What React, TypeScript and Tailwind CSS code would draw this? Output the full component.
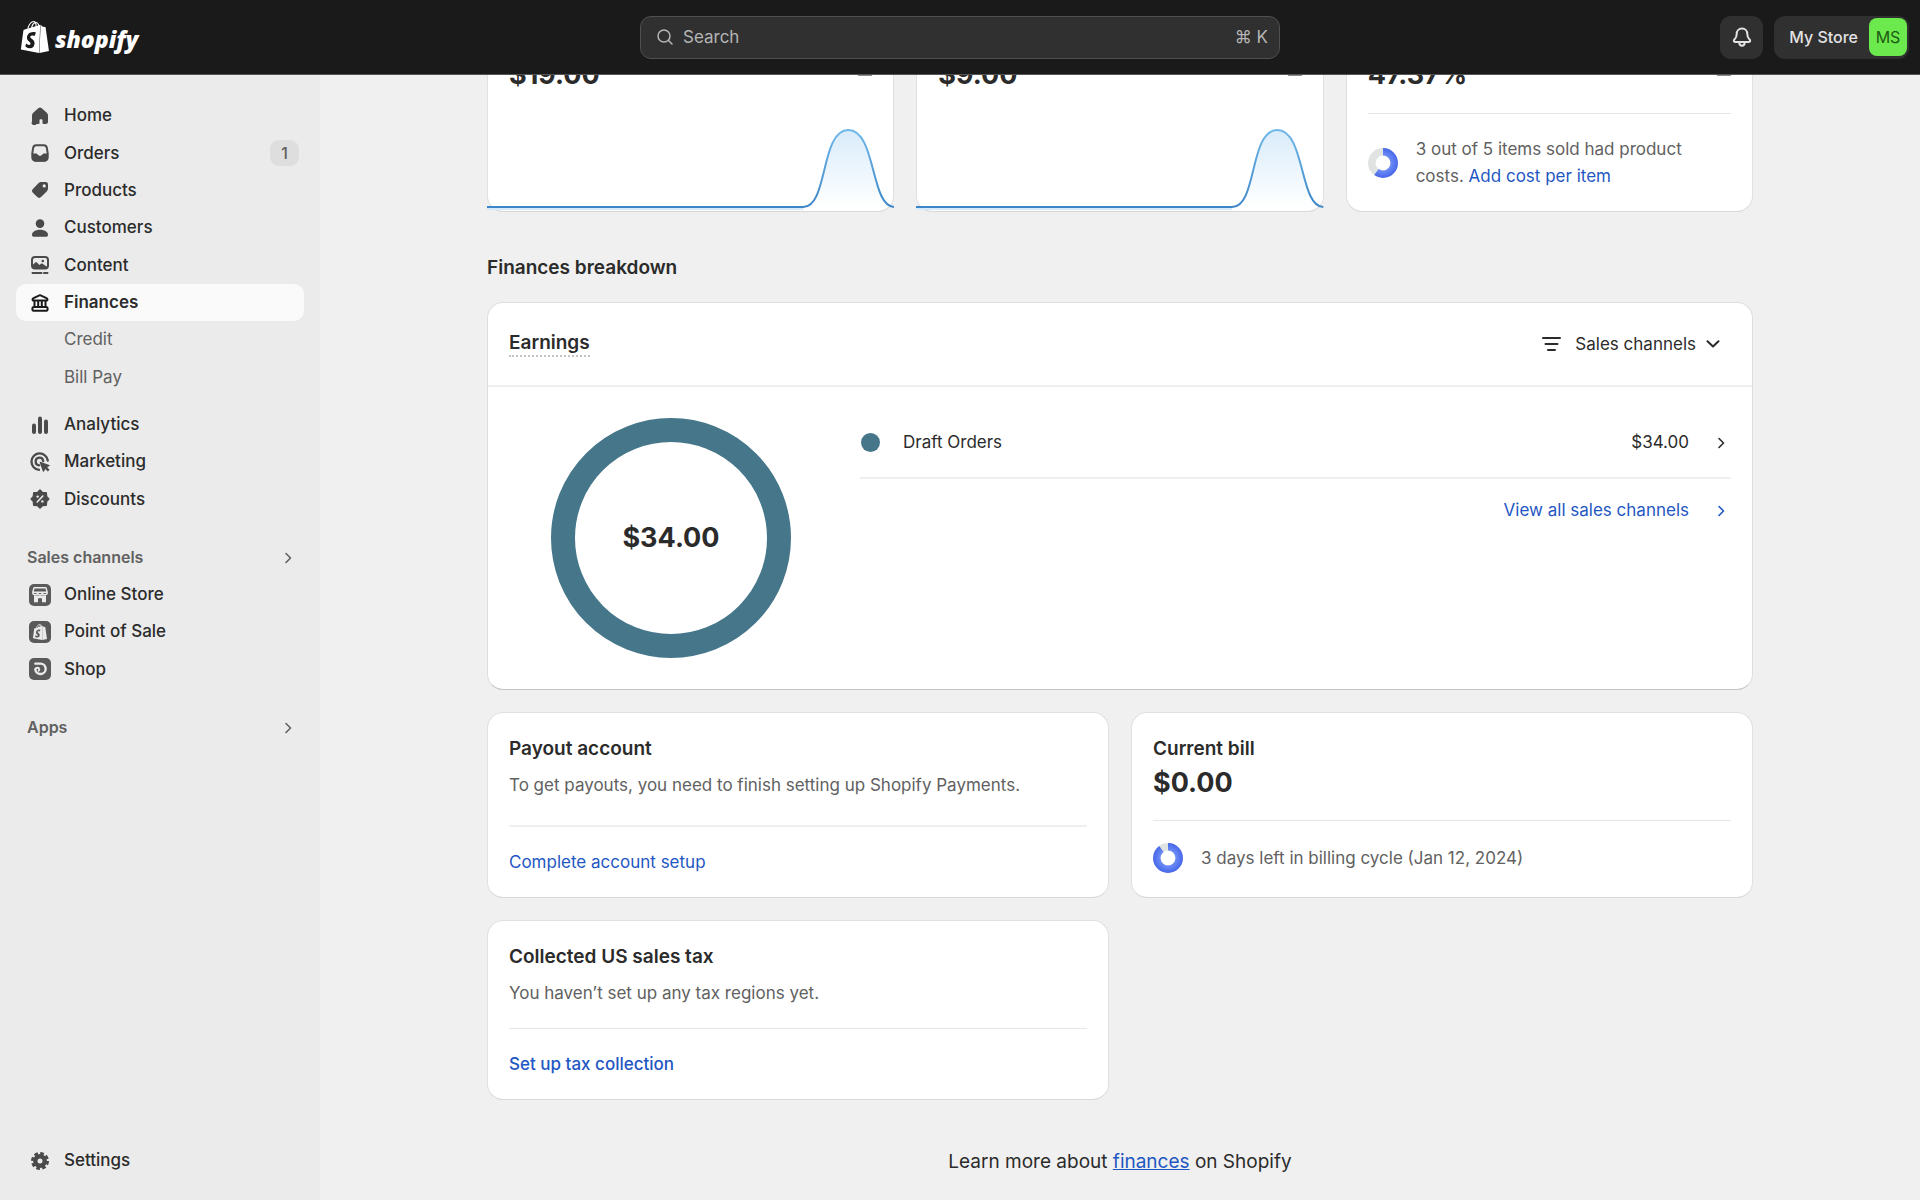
import React from 'react';
import { SiShopify } from 'react-icons/si';

interface IconProps {
  className?: string;
}

interface NavItem {
  label: string;
  icon?: React.ReactNode;
  badge?: string;
  active?: boolean;
  sub?: boolean;
}

const HomeIcon = () => (
  <svg className="size-[18px]" viewBox="0 0 18 18" fill="currentColor" aria-hidden="true">
    <path d="M7.5 1.1a2.3 2.3 0 0 1 3 0l5.3 4.6c.8.7 1.2 1.6 1.2 2.6v6.200a2.500 2.500 0 0 1-2.500 2.500h-2a1 1 0 0 1-1-1v-2.800a1 1 0 0 0-1-1h-1a1 1 0 0 0-1 1V16a1 1 0 0 1-1 1h-2A2.500 2.500 0 0 1 1 14.500V8.300c0-1 .4-1.900 1.200-2.600z" />
  </svg>
);

const OrdersIcon = () => (
  <svg className="size-[18px]" viewBox="0 0 18 18" aria-hidden="true">
    <path
      d="M5.2 1.2h7.6c1.5 0 2.7 1 3 2.5l.9 5.3v4.5a3.3 3.3 0 0 1-3.3 3.3H4.6a3.3 3.3 0 0 1-3.3-3.3V9l.9-5.3c.3-1.5 1.5-2.5 3-2.5z"
      fill="none"
      stroke="currentColor"
      strokeWidth="2"
    />
    <path d="M1 9.500h4.300c.5 0 .8.300 1.100.7.500.9 1.400 1.500 2.600 1.500s2.100-.6 2.600-1.500c.3-.4.6-.7 1.100-.7H17v4c0 2.500-1.500 4-4 4H5c-2.500 0-4-1.500-4-4z" fill="currentColor" />
  </svg>
);

const ProductsIcon = () => (
  <svg className="size-[18px]" viewBox="0 0 18 18" fill="currentColor" aria-hidden="true">
    <path
      fillRule="evenodd"
      d="M10.5 1h4.200A2.300 2.300 0 0 1 17 3.300v4c0 1.200-.5 2.300-1.300 3.100l-5.400 5.400a3 3 0 0 1-4.300 0l-3.900-3.700a3 3 0 0 1 0-4.300l5.300-5.500C8.200 1.400 9.300 1 10.500 1zm2.700 5.500a1.600 1.600 0 1 0 0-3.200 1.600 1.600 0 0 0 0 3.200z"
    />
  </svg>
);

const CustomersIcon = () => (
  <svg className="size-[18px]" viewBox="0 0 18 18" fill="currentColor" aria-hidden="true">
    <circle cx="9" cy="4.6" r="4.3" />
    <path d="M1 16c0-3 3.300-5.200 8-5.200s8 2.200 8 5.200c0 1-.7 1.700-1.700 1.700H2.700C1.700 17.700 1 17 1 16z" />
  </svg>
);

const ContentIcon = () => (
  <svg className="size-[18px]" viewBox="0 0 18 18" fill="none" aria-hidden="true">
    <rect x="1" y="1" width="16" height="11.5" rx="3" stroke="currentColor" strokeWidth="2" />
    <path d="M1 9.500l3-2.700c.7-.6 1.500-.6 2.100 0L8.500 9l1.200-1c.7-.6 1.500-.6 2.200 0L17 11.500l-2 1.500H3l-2-1.500z" fill="currentColor" />
    <circle cx="11.8" cy="5" r="1.3" fill="currentColor" />
    <path d="M1.500 17h9M13 17h3.500" stroke="currentColor" strokeWidth="2" strokeLinecap="round" />
  </svg>
);

const FinancesIcon = () => (
  <svg className="size-[18px] text-[#1a1a1a]" viewBox="0 0 18 18" fill="none" stroke="currentColor" strokeWidth="2" strokeLinejoin="round" aria-hidden="true">
    <path d="M9 1.200l6.500 2.900c.8.400 1 .8 1 1.300 0 .7-.5 1.200-1.200 1.200H2.700c-.7 0-1.200-.5-1.200-1.200 0-.5.2-.9 1-1.300z" />
    <path d="M3.500 7v6M7.200 7v6M10.800 7v6M14.500 7v6" />
    <path d="M2.900 13h12.200c.8 0 1.500.7 1.500 1.500v1c0 .7-.5 1.200-1.200 1.200H2.600c-.7 0-1.200-.5-1.200-1.200v-1c0-.8.700-1.500 1.500-1.500z" />
  </svg>
);

const AnalyticsIcon = () => (
  <svg className="size-[18px]" viewBox="0 0 18 18" fill="currentColor" aria-hidden="true">
    <rect x="1" y="7.5" width="4" height="10.5" rx="2" />
    <rect x="7" y="0.5" width="4" height="17.5" rx="2" />
    <rect x="13" y="3.5" width="4" height="14.5" rx="2" />
  </svg>
);

const MarketingIcon = () => (
  <svg className="size-5" viewBox="0 0 20 20" fill="none" aria-hidden="true">
    <path d="M17.800 8.500A8.200 8.200 0 1 0 9 17.800" stroke="currentColor" strokeWidth="2.3" strokeLinecap="round" />
    <path d="M13.200 9A3.800 3.800 0 1 0 9.200 13.300" stroke="currentColor" strokeWidth="2.3" strokeLinecap="round" />
    <path d="M10.300 9.700l9 3.200c.6.200.6.900.1 1.200l-2.200 1.200 2.300 2.500-1.700 1.700-2.500-2.400-1.300 2.300c-.3.500-1 .5-1.200-.1l-3.100-8.900c-.2-.5.200-.9.600-.7z" fill="currentColor" />
  </svg>
);

const DiscountsIcon = () => (
  <svg className="size-5" viewBox="0 0 20 20" fill="none" aria-hidden="true">
    <path
      d="M10 1.200l2.500 2.300 3.700.3.300 3.700L18.800 10l-2.300 2.500-.3 3.700-3.700.3L10 18.800l-2.500-2.300-3.700-.3-.3-3.700L1.200 10l2.300-2.500.3-3.700 3.700-.3z"
      fill="currentColor"
      stroke="currentColor"
      strokeWidth="1.6"
      strokeLinejoin="round"
    />
    <path d="M7.200 13l5.600-6" stroke="#ebebeb" strokeWidth="1.6" strokeLinecap="round" />
    <circle cx="7.6" cy="7.6" r="1.2" fill="#ebebeb" />
    <circle cx="12.4" cy="12.4" r="1.2" fill="#ebebeb" />
  </svg>
);

const OnlineStoreIcon = () => (
  <svg className="size-[22px]" viewBox="0 0 22 22" aria-hidden="true">
    <rect width="22" height="22" rx="5" fill="#5a5a5a" />
    <path d="M5.200 3.700h11.600M3.800 8l1.200-4M18.200 8L17 4M3.800 8.200h14.400" stroke="#ebebeb" strokeWidth="1.4" strokeLinecap="round" />
    <path d="M3.800 8.500c0 3 4.800 3 4.800 0 0 3 4.800 3 4.800 0 0 3 4.800 3 4.800 0" fill="none" stroke="#ebebeb" strokeWidth="1.5" />
    <path d="M5 11.500h12v6.800h-4v-4.100H9v4.100H5z" fill="#ebebeb" />
  </svg>
);

const PosIcon = () => (
  <span className="flex size-[22px] items-center justify-center rounded-[5px] bg-[#5a5a5a] text-[#ebebeb]">
    <SiShopify className="size-4" aria-hidden="true" />
  </span>
);

const ShopIcon = () => (
  <svg className="size-[22px]" viewBox="0 0 22 22" fill="none" stroke="#ebebeb" strokeLinecap="round" strokeLinejoin="round" aria-hidden="true">
    <rect width="22" height="22" rx="5" fill="#5a5a5a" stroke="none" />
    <path d="M6.300 5.600h5.200a5.200 5.200 0 1 1-5.200 5.800" strokeWidth="2.4" />
    <path d="M6.300 11.200c.6-1.800 3.600-2 4-.2.200.8-.1 1.500-.7 1.800" strokeWidth="1.8" />
  </svg>
);

const SettingsIcon = () => (
  <svg className="size-5" viewBox="0 0 20 20" fill="none" stroke="currentColor" aria-hidden="true">
    <circle cx="10" cy="10" r="7.5" strokeWidth="3" strokeDasharray="3.6 2.29" />
    <circle cx="10" cy="10" r="4.7" strokeWidth="4.4" />
  </svg>
);

const ChevronRight = ({ className }: IconProps) => (
  <svg className={className} viewBox="0 0 12 12" fill="none" stroke="currentColor" strokeWidth="1.6" strokeLinecap="round" strokeLinejoin="round" aria-hidden="true">
    <path d="M4 1.500L8.500 6 4 10.500" />
  </svg>
);

const mainNav: NavItem[] = [
  { label: 'Home', icon: <HomeIcon /> },
  { label: 'Orders', icon: <OrdersIcon />, badge: '1' },
  { label: 'Products', icon: <ProductsIcon /> },
  { label: 'Customers', icon: <CustomersIcon /> },
  { label: 'Content', icon: <ContentIcon /> },
  { label: 'Finances', icon: <FinancesIcon />, active: true },
  { label: 'Credit', sub: true },
  { label: 'Bill Pay', sub: true },
];

const insightNav: NavItem[] = [
  { label: 'Analytics', icon: <AnalyticsIcon /> },
  { label: 'Marketing', icon: <MarketingIcon /> },
  { label: 'Discounts', icon: <DiscountsIcon /> },
];

const channelNav: NavItem[] = [
  { label: 'Online Store', icon: <OnlineStoreIcon /> },
  { label: 'Point of Sale', icon: <PosIcon /> },
  { label: 'Shop', icon: <ShopIcon /> },
];

const NavLink = ({ item }: { item: NavItem }) => (
  <li className="flex">
    <a
      href="#"
      className={`flex flex-1 items-center rounded-[10px] pr-[5px] pl-3 ${
        item.active ? 'bg-[#fafafa] font-semibold' : item.sub ? 'text-[#616161]' : 'font-medium'
      }`}
    >
      <span className="mr-3 flex w-6 justify-center text-[#4a4a4a]">{item.icon}</span>
      <span className="flex-1">{item.label}</span>
      {item.badge && (
        <span className="flex h-[26px] w-[29px] items-center justify-center rounded-[9px] bg-[#dedede] text-[16px] text-[#616161]">
          {item.badge}
        </span>
      )}
    </a>
  </li>
);

const NavHeading = ({ label }: { label: string }) => (
  <button type="button" className="flex h-[37px] w-full items-center justify-between pr-[10px] pl-[11px] text-[16px] font-semibold text-[#616161]">
    {label}
    <ChevronRight className="size-3" />
  </button>
);

const Sidebar = () => (
  <nav className="flex w-80 shrink-0 flex-col bg-[#ebebeb] px-4 pt-[22px] pb-[21px]">
    <ul className="grid h-[299px] auto-rows-fr">
      {mainNav.map((item) => (
        <NavLink key={item.label} item={item} />
      ))}
    </ul>
    <ul className="mt-[10px] grid h-28 auto-rows-fr">
      {insightNav.map((item) => (
        <NavLink key={item.label} item={item} />
      ))}
    </ul>
    <div className="mt-[21px]">
      <NavHeading label="Sales channels" />
      <ul className="grid h-28 auto-rows-fr">
        {channelNav.map((item) => (
          <NavLink key={item.label} item={item} />
        ))}
      </ul>
    </div>
    <div className="mt-[21px]">
      <NavHeading label="Apps" />
    </div>
    <ul className="mt-auto grid h-[37px]">
      <NavLink item={{ label: 'Settings', icon: <SettingsIcon /> }} />
    </ul>
  </nav>
);

const TopBar = () => (
  <header className="sticky top-0 z-10 grid h-[75px] grid-cols-[1fr_640px_1fr] items-center border-b border-[#555] bg-[#1a1a1a] px-[11px] text-[#e3e3e3]">
    <a href="#" className="flex items-center gap-1 pl-2 text-white">
      <SiShopify className="size-8" aria-hidden="true" />
      <span className="pt-1 font-['Open_Sans',sans-serif] text-[23px] leading-8 font-extrabold italic">shopify</span>
    </a>
    <label className="flex h-[43px] items-center gap-[10px] rounded-[11px] border border-[#505050] bg-[#303030] pr-[11px] pl-4 text-[#b5b5b5]">
      <svg className="size-4" viewBox="0 0 16 16" fill="none" stroke="currentColor" strokeWidth="1.5" strokeLinecap="round" aria-hidden="true">
        <circle cx="7" cy="7" r="6" />
        <path d="M11.300 11.300L15 15" />
      </svg>
      <input type="text" placeholder="Search" aria-label="Search" className="min-w-0 flex-1 bg-transparent outline-none placeholder:text-[#b5b5b5]" />
      <span>⌘ K</span>
    </label>
    <div className="flex justify-end gap-[11px]">
      <button type="button" aria-label="Notifications" className="flex size-[43px] items-center justify-center rounded-[11px] bg-[#303030]">
        <svg className="size-5" viewBox="0 0 20 20" fill="none" stroke="currentColor" strokeWidth="2" strokeLinejoin="round" aria-hidden="true">
          <path d="M10 1.500c-3.300 0-5.300 2.400-5.300 5.400 0 2.900-.7 4-2.100 5.300-1.200 1.100-1 2.700.6 2.700h13.600c1.600 0 1.800-1.600.6-2.700-1.400-1.300-2.100-2.400-2.100-5.300 0-3-2-5.400-5.300-5.400z" />
          <path d="M7.200 15c0 2.200 1 3.700 2.800 3.700s2.800-1.500 2.800-3.700" />
        </svg>
      </button>
      <button type="button" className="flex h-[43px] items-center gap-[11px] rounded-[11px] bg-[#303030] pr-[2px] pl-[15px] text-[16px] font-medium">
        My Store
        <span className="flex size-[38px] items-center justify-center rounded-lg bg-[#6ce94d] font-normal text-[#1c5b13]">MS</span>
      </button>
    </div>
  </header>
);

const cardClass = 'rounded-2xl border border-[#e0e0e0] border-b-[#d8d8d8] bg-white';

const MetricHeader = ({ value }: { value: string }) => (
  <div className="flex items-center justify-between">
    <p className="text-[27px] leading-8 font-bold">{value}</p>
    <span className="h-[2px] w-[14px] bg-[#8a8a8a]" />
  </div>
);

const SparkCard = ({ id, value }: { id: string; value: string }) => (
  <section className={`flex flex-col justify-between ${cardClass}`}>
    <div className="p-[21px]">
      <MetricHeader value={value} />
    </div>
    <svg className="-mx-px h-[84px] w-[calc(100%+2px)]" viewBox="0 0 407 84" preserveAspectRatio="none" fill="none" aria-hidden="true">
      <defs>
        <linearGradient id={`${id}-line`} gradientUnits="userSpaceOnUse" x1="0" y1="3" x2="0" y2="81">
          <stop offset="0" stopColor="#70b8e8" />
          <stop offset="1" stopColor="#3c86c8" />
        </linearGradient>
        <linearGradient id={`${id}-fill`} x1="0" y1="0" x2="0" y2="1">
          <stop offset="0" stopColor="#d9ecfa" />
          <stop offset="1" stopColor="#ffffff" />
        </linearGradient>
      </defs>
      <path d="M316 80C341 80 333 3 361 3s22 77 46 77z" fill={`url(#${id}-fill)`} />
      <path d="M0 82H316" stroke="#d6eafa" strokeWidth="2" />
      <path d="M0 80H316C341 80 333 3 361 3s22 77 46 77" stroke={`url(#${id}-line)`} strokeWidth="2" />
    </svg>
  </section>
);

// Small progress donut, percent runs clockwise from the top
const ProgressDonut = ({ id, percent }: { id: string; percent: number }) => (
  <svg className="size-[30px] shrink-0" viewBox="0 0 30 30" fill="none" aria-hidden="true">
    <defs>
      <radialGradient id={id} gradientUnits="userSpaceOnUse" cx="15" cy="15" r="15">
        <stop offset="0.5" stopColor="#6f8ef5" />
        <stop offset="1" stopColor="#4766ea" />
      </radialGradient>
    </defs>
    <circle cx="15" cy="15" r="11.2" stroke="#e1e3e3" strokeWidth="7.5" />
    <circle
      cx="15"
      cy="15"
      r="11.2"
      stroke={`url(#${id})`}
      strokeWidth="7.5"
      pathLength={100}
      strokeDasharray={`${percent} 100`}
      transform="rotate(-90 15 15)"
    />
  </svg>
);

const EarningsCard = () => (
  <section className="rounded-2xl border border-[#dedede] border-b-[#c4c4c4] bg-white">
    <div className="flex h-[84px] items-center justify-between border-b-2 border-[#efefef] px-[21px]">
      <h3 className="border-b-2 border-dotted border-[#c4c4c4] text-[19px] leading-6 font-semibold">Earnings</h3>
      <button type="button" className="flex items-center pr-[11px]">
        <svg className="mr-[14px] h-[14px] w-[19px]" viewBox="0 0 19 14" stroke="currentColor" strokeWidth="2" strokeLinecap="round" aria-hidden="true">
          <path d="M1 1h17M3.500 7h12M6 13h7" />
        </svg>
        Sales channels
        <svg className="ml-[10px] h-2 w-[14px]" viewBox="0 0 14 8" fill="none" stroke="currentColor" strokeWidth="2" strokeLinecap="round" strokeLinejoin="round" aria-hidden="true">
          <path d="M1.500 1.200L7 6.500l5.500-5.300" />
        </svg>
      </button>
    </div>
    <div className="flex gap-[27px] px-[21px]">
      <div className="flex w-[324px] shrink-0 justify-center py-[31px]">
        <div className="flex size-60 items-center justify-center rounded-full border-24 border-[#45768a] text-[27px] leading-8 font-bold">
          $34.00
        </div>
      </div>
      <div className="flex-1 pt-[21px]">
        <a href="#" className="flex items-center border-b-2 border-[#efefef] py-[21px]">
          <span className="mr-[23px] ml-[1px] size-[19px] rounded-full bg-[#45768a]" />
          <span className="flex-1">Draft Orders</span>
          <span>$34.00</span>
          <ChevronRight className="mr-1 ml-[26px] size-3" />
        </a>
        <a href="#" className="flex items-center justify-end pt-[18px] text-[#1f57c3]">
          View all sales channels
          <ChevronRight className="mr-1 ml-[26px] size-3" />
        </a>
      </div>
    </div>
  </section>
);

const App: React.FC = () => {
  return (
    <div className="flex min-h-screen flex-col bg-[#f0f0f0] font-[Inter,sans-serif] text-[17px] leading-[27px] text-[#2b2b2b]">
      <TopBar />
      <div className="flex flex-1">
        <Sidebar />
        <main className="-mt-[38px] min-w-0 flex-1 px-6">
          <div className="mx-auto max-w-[1266px]">
            <div className="grid grid-cols-3 gap-[22px]">
              <SparkCard id="sales" value="$19.00" />
              <SparkCard id="cost" value="$9.00" />
              <section className={`p-[21px] ${cardClass}`}>
                <MetricHeader value="47.37%" />
                <div className="mt-[22px] flex items-center gap-[18px] border-t border-[#e6e6e6] pt-[22px]">
                  <ProgressDonut id="margin-donut" percent={60} />
                  <p className="text-[#616161]">
                    3 out of 5 items sold had product costs.{' '}
                    <a href="#" className="text-[#1f57c3]">Add cost per item</a>
                  </p>
                </div>
              </section>
            </div>

            <h2 className="mt-[42px] mb-[21px] text-[19px] font-semibold">Finances breakdown</h2>

            <EarningsCard />

            <div className="mt-[22px] grid grid-cols-2 gap-[22px]">
              <section className={`p-[21px] ${cardClass}`}>
                <h3 className="pt-px text-[19px] font-semibold">Payout account</h3>
                <p className="mt-[10px] text-[#616161]">To get payouts, you need to finish setting up Shopify Payments.</p>
                <div className="mt-[26px] border-t-2 border-[#efefef] pt-[22px]">
                  <a href="#" className="text-[#1f57c3]">Complete account setup</a>
                </div>
              </section>

              <section className={`p-[21px] ${cardClass}`}>
                <h3 className="pt-px text-[19px] font-semibold">Current bill</h3>
                <p className="mt-[5px] text-[27px] leading-8 font-bold">$0.00</p>
                <div className="mt-[21px] flex items-center gap-[18px] border-t border-[#e6e6e6] pt-[22px]">
                  <ProgressDonut id="bill-donut" percent={90} />
                  <p className="text-[#616161]">3 days left in billing cycle (Jan 12, 2024)</p>
                </div>
              </section>

              <section className={`p-[21px] ${cardClass}`}>
                <h3 className="pt-px text-[19px] font-semibold">Collected US sales tax</h3>
                <p className="mt-[10px] text-[#616161]">You haven’t set up any tax regions yet.</p>
                <div className="mt-[21px] border-t border-[#e6e6e6] pt-[22px]">
                  <a href="#" className="font-medium text-[#1f57c3]">Set up tax collection</a>
                </div>
              </section>
            </div>

            <p className="mt-12 pb-5 text-center text-[19px]">
              Learn more about <a href="#" className="text-[#1f57c3] underline">finances</a> on Shopify
            </p>
          </div>
        </main>
      </div>
    </div>
  );
};

export default App;
